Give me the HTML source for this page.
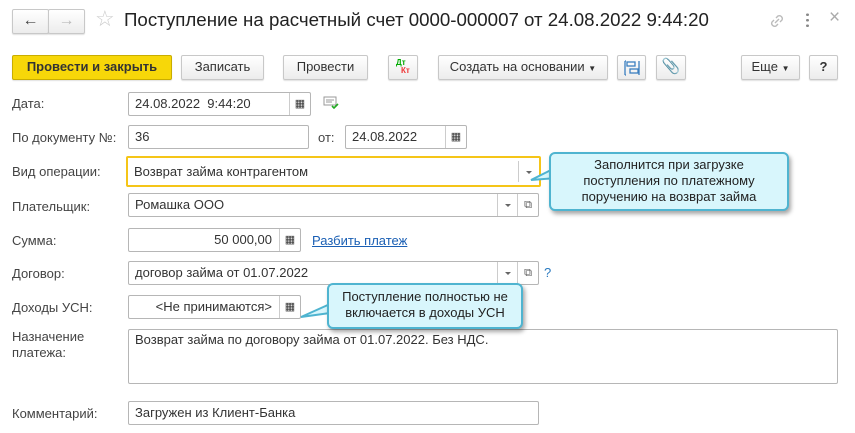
<!DOCTYPE html><html><head><meta charset="utf-8"><style>
body{margin:0;width:855px;height:433px;background:#fff;position:relative;font-family:"Liberation Sans",Arial,sans-serif;font-size:13px;color:#333;overflow:hidden}
.a{position:absolute}
.btn{position:absolute;height:24px;box-sizing:border-box;border:1px solid #c8c8c8;border-radius:2px;background:linear-gradient(#fff,#ececec);text-align:center;line-height:22px;color:#333;box-shadow:0 1px 1px rgba(0,0,0,.12)}
.f{position:absolute;height:24px;box-sizing:border-box;border:1px solid #b6b6b6;border-radius:2px;background:#fff;line-height:22px;padding:0 6px;color:#333}
.lbl{position:absolute;left:12px;color:#444}
.sb{position:absolute;top:0;bottom:0;border-left:1px solid #ccc;width:20px}
.tri{position:absolute;width:0;height:0;border-left:3px solid transparent;border-right:3px solid transparent;border-top:3px solid #666}
.tip{position:absolute;background:#d8f6fc;border:2px solid #4fb4d0;border-radius:6px;box-shadow:2px 3px 4px rgba(0,0,0,.35);text-align:center;color:#222;font-size:13px;line-height:16px}
</style></head><body>
<div class="btn" style="left:12px;top:9px;width:37px;height:25px;font-size:16px;line-height:22px;color:#444">&#8592;</div>
<div class="btn" style="left:48px;top:9px;width:37px;height:25px;font-size:16px;line-height:22px;color:#bbb">&#8594;</div>
<div class="a" style="left:95px;top:6px;font-size:22px;color:#ccc">☆</div>
<div class="a" style="left:124px;top:9px;font-size:18.7px;color:#222">Поступление на расчетный счет 0000-000007 от 24.08.2022 9:44:20</div>
<svg class="a" style="left:768px;top:12px" width="18" height="18" viewBox="0 0 18 18" fill="none" stroke="#bbb" stroke-width="1.4"><path d="M8 6l2-2a3 3 0 014 4l-2 2M10 12l-2 2a3 3 0 01-4-4l2-2M7 11l4-4"/></svg>
<div class="a" style="left:806px;top:12px;width:3px;height:16px;background:radial-gradient(circle,#888 1.3px,transparent 1.5px) 0 0/3px 5.5px"></div>
<div class="a" style="left:829px;top:7px;font-size:19px;color:#aaa">×</div>

<div class="btn" style="left:12px;top:55px;width:160px;height:25px;background:#f7d709;border-color:#c9ad00;font-weight:bold;color:#333">Провести и закрыть</div>
<div class="btn" style="left:181px;top:55px;width:83px;height:25px">Записать</div>
<div class="btn" style="left:283px;top:55px;width:85px;height:25px">Провести</div>
<div class="btn" style="left:388px;top:55px;width:30px;height:25px"><span class="a" style="left:7px;top:-4px;font-size:8px;color:#0a0;font-weight:bold">Дт</span><span class="a" style="left:12px;top:4px;font-size:8px;color:#e33;font-weight:bold">Кт</span></div>
<div class="btn" style="left:438px;top:55px;width:170px;height:25px">Создать на основании <span style="font-size:8px">▼</span></div>
<div class="btn" style="left:617px;top:55px;width:29px;height:25px"><svg width="16" height="16" style="margin-top:4px" fill="none" stroke="#3b7fc0" stroke-width="1.3"><rect x="3" y="2" width="8" height="4"/><rect x="6" y="9" width="8" height="4"/><path d="M1 1v14M1 1h1M1 15h1M15 1v14"/></svg></div>
<div class="btn" style="left:656px;top:55px;width:30px;height:25px;color:#777;font-size:15px">&#128206;</div>
<div class="btn" style="left:741px;top:55px;width:59px;height:25px">Еще <span style="font-size:8px">▼</span></div>
<div class="btn" style="left:809px;top:55px;width:29px;height:25px;font-weight:bold">?</div>

<div class="lbl" style="top:96px">Дата:</div>
<div class="f" style="left:128px;top:92px;width:183px">24.08.2022&nbsp; 9:44:20<div class="sb" style="right:0;font-size:11px;text-align:center">▦</div></div>
<svg class="a" style="left:323px;top:96px" width="16" height="14"><rect x="1" y="1" width="12" height="8" fill="#fff" stroke="#999"/><path d="M3 4h8M3 6h6" stroke="#999"/><path d="M9 10l2 2 4-4" stroke="#2a2" stroke-width="1.6" fill="none"/></svg>

<div class="lbl" style="top:130px">По документу №:</div>
<div class="f" style="left:128px;top:125px;width:181px">36</div>
<div class="lbl" style="left:318px;top:130px">от:</div>
<div class="f" style="left:345px;top:125px;width:122px">24.08.2022<div class="sb" style="right:0;font-size:11px;text-align:center">▦</div></div>

<div class="lbl" style="top:164px">Вид операции:</div>
<div class="f" style="left:126px;top:156px;width:415px;height:31px;border:2px solid #f5c518;line-height:27px">Возврат займа контрагентом<div class="sb" style="right:0;top:3px;bottom:3px"><div class="tri" style="left:7px;top:10px"></div></div></div>

<div class="lbl" style="top:199px">Плательщик:</div>
<div class="f" style="left:128px;top:193px;width:411px">Ромашка ООО<div class="sb" style="right:20px"><div class="tri" style="left:7px;top:10px"></div></div><div class="sb" style="right:0;text-align:center;font-size:11px;color:#555">⧉</div></div>

<div class="lbl" style="top:233px">Сумма:</div>
<div class="f" style="left:128px;top:228px;width:173px;text-align:right;padding-right:28px">50 000,00<div class="sb" style="right:0;text-align:center;font-size:11px">▦</div></div>
<div class="a" style="left:312px;top:233px;color:#1a5fb4;text-decoration:underline">Разбить платеж</div>

<div class="lbl" style="top:266px">Договор:</div>
<div class="f" style="left:128px;top:261px;width:411px">договор займа от 01.07.2022<div class="sb" style="right:20px"><div class="tri" style="left:7px;top:10px"></div></div><div class="sb" style="right:0;text-align:center;font-size:11px;color:#555">⧉</div></div>
<div class="a" style="left:544px;top:265px;color:#2a7ac0;font-size:13px">?</div>

<div class="lbl" style="top:300px">Доходы УСН:</div>
<div class="f" style="left:128px;top:295px;width:173px;text-align:right;padding-right:28px">&lt;Не принимаются&gt;<div class="sb" style="right:0;text-align:center;font-size:11px">▦</div></div>

<div class="lbl" style="top:329px;line-height:16px">Назначение<br>платежа:</div>
<div class="f" style="left:128px;top:329px;width:710px;height:55px;line-height:20px">Возврат займа по договору займа от 01.07.2022. Без НДС.</div>

<div class="lbl" style="top:406px">Комментарий:</div>
<div class="f" style="left:128px;top:401px;width:411px">Загружен из Клиент-Банка</div>

<svg class="a" style="left:525px;top:160px" width="40" height="30"><path d="M30 8L6 20 32 18z" fill="#d8f6fc" stroke="#4fb4d0" stroke-width="2"/></svg>
<div class="tip" style="left:549px;top:152px;width:236px;height:52px;padding-top:3px">Заполнится при загрузке<br>поступления по платежному<br>поручению на возврат займа</div>
<svg class="a" style="left:296px;top:298px" width="40" height="26"><path d="M34 6L5 19 34 15z" fill="#d8f6fc" stroke="#4fb4d0" stroke-width="2"/></svg>
<div class="tip" style="left:327px;top:283px;width:192px;height:38px;padding-top:4px">Поступление полностью не<br>включается в доходы УСН</div>
</body></html>
